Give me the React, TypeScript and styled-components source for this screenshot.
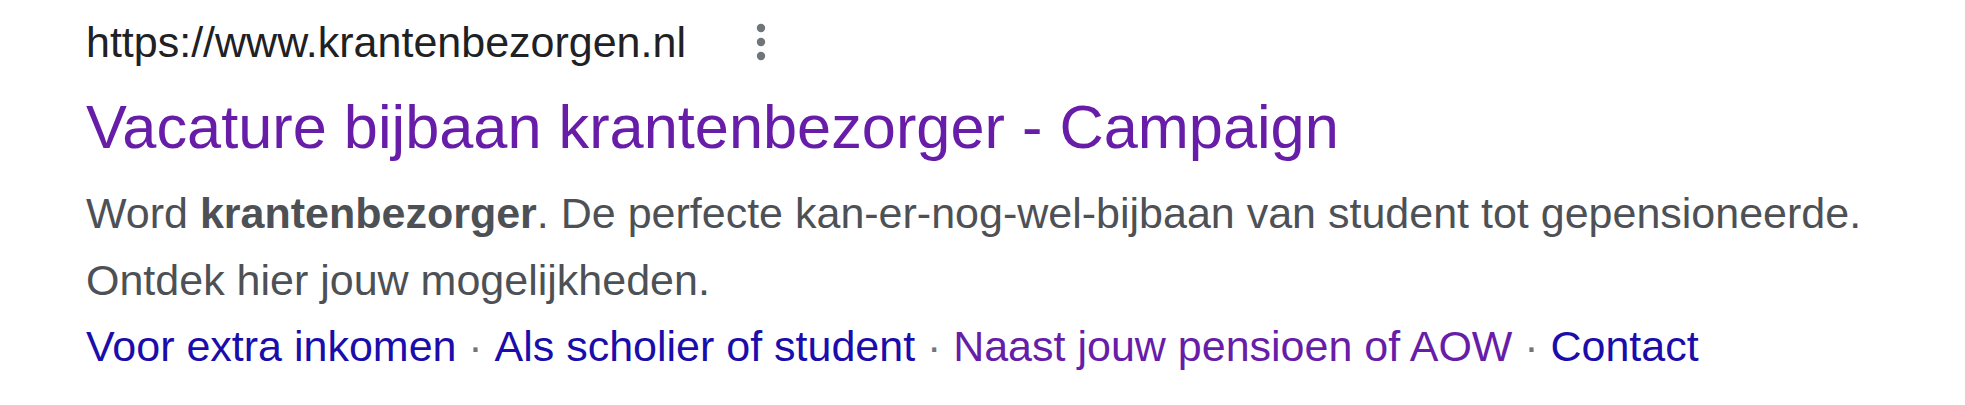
import React from "react";
import styled, { createGlobalStyle } from "styled-components";

const GlobalStyle = createGlobalStyle`
  html, body {
    margin: 0;
    padding: 0;
    background: #ffffff;
  }
  body {
    font-family: "Liberation Sans", Arial, sans-serif;
  }
`;

const Result = styled.div`
  display: flex;
  flex-direction: column;
  padding: 12px 20px 0 86px;
  font-family: "Liberation Sans", Arial, sans-serif;
`;

const UrlRow = styled.div`
  display: flex;
  align-items: center;
  gap: 60px;
  height: 60px;
`;

const Url = styled.span`
  font-size: 43px;
  line-height: 60px;
  color: #202124;
`;

const Kebab = styled.button`
  display: flex;
  align-items: center;
  justify-content: center;
  width: 30px;
  height: 48px;
  padding: 0;
  border: none;
  background: transparent;
  color: #70757a;
`;

const Title = styled.h3`
  margin: 15px 0 0;
  font-size: 61.3px;
  font-weight: 400;
  line-height: 80px;
  color: #681da8;
`;

const Snippet = styled.div`
  margin-top: 13px;
  font-size: 43px;
  line-height: 67px;
  color: #4d5156;
`;

const Em = styled.b`
  font-weight: 700;
  color: #4d5156;
`;

const Sitelinks = styled.div`
  display: flex;
  align-items: baseline;
  font-size: 43px;
  line-height: 65px;
`;

const Sitelink = styled.a<{ $visited?: boolean }>`
  color: ${(p) => (p.$visited ? "#681da8" : "#1a0dab")};
  text-decoration: none;
`;

const Sep = styled.span`
  display: inline-block;
  width: 38px;
  text-align: center;
  color: #70757a;
`;

const links = [
  { label: "Voor extra inkomen", visited: false },
  { label: "Als scholier of student", visited: false },
  { label: "Naast jouw pensioen of AOW", visited: true },
  { label: "Contact", visited: false },
];

export default function App() {
  return (
    <>
      <GlobalStyle />
      <Result>
        <UrlRow>
          <Url>https://www.krantenbezorgen.nl</Url>
          <Kebab aria-label="Meer opties">
            <svg width="10" height="40" viewBox="0 0 10 40" fill="currentColor">
              <circle cx="5" cy="6" r="4.2" />
              <circle cx="5" cy="20" r="4.2" />
              <circle cx="5" cy="34" r="4.2" />
            </svg>
          </Kebab>
        </UrlRow>
        <Title>Vacature bijbaan krantenbezorger - Campaign</Title>
        <Snippet>
          Word <Em>krantenbezorger</Em>. De perfecte kan-er-nog-wel-bijbaan van
          student tot gepensioneerde. Ontdek hier jouw mogelijkheden.
        </Snippet>
        <Sitelinks>
          {links.map((l, i) => (
            <React.Fragment key={l.label}>
              {i > 0 && <Sep>·</Sep>}
              <Sitelink href="#" $visited={l.visited}>
                {l.label}
              </Sitelink>
            </React.Fragment>
          ))}
        </Sitelinks>
      </Result>
    </>
  );
}
